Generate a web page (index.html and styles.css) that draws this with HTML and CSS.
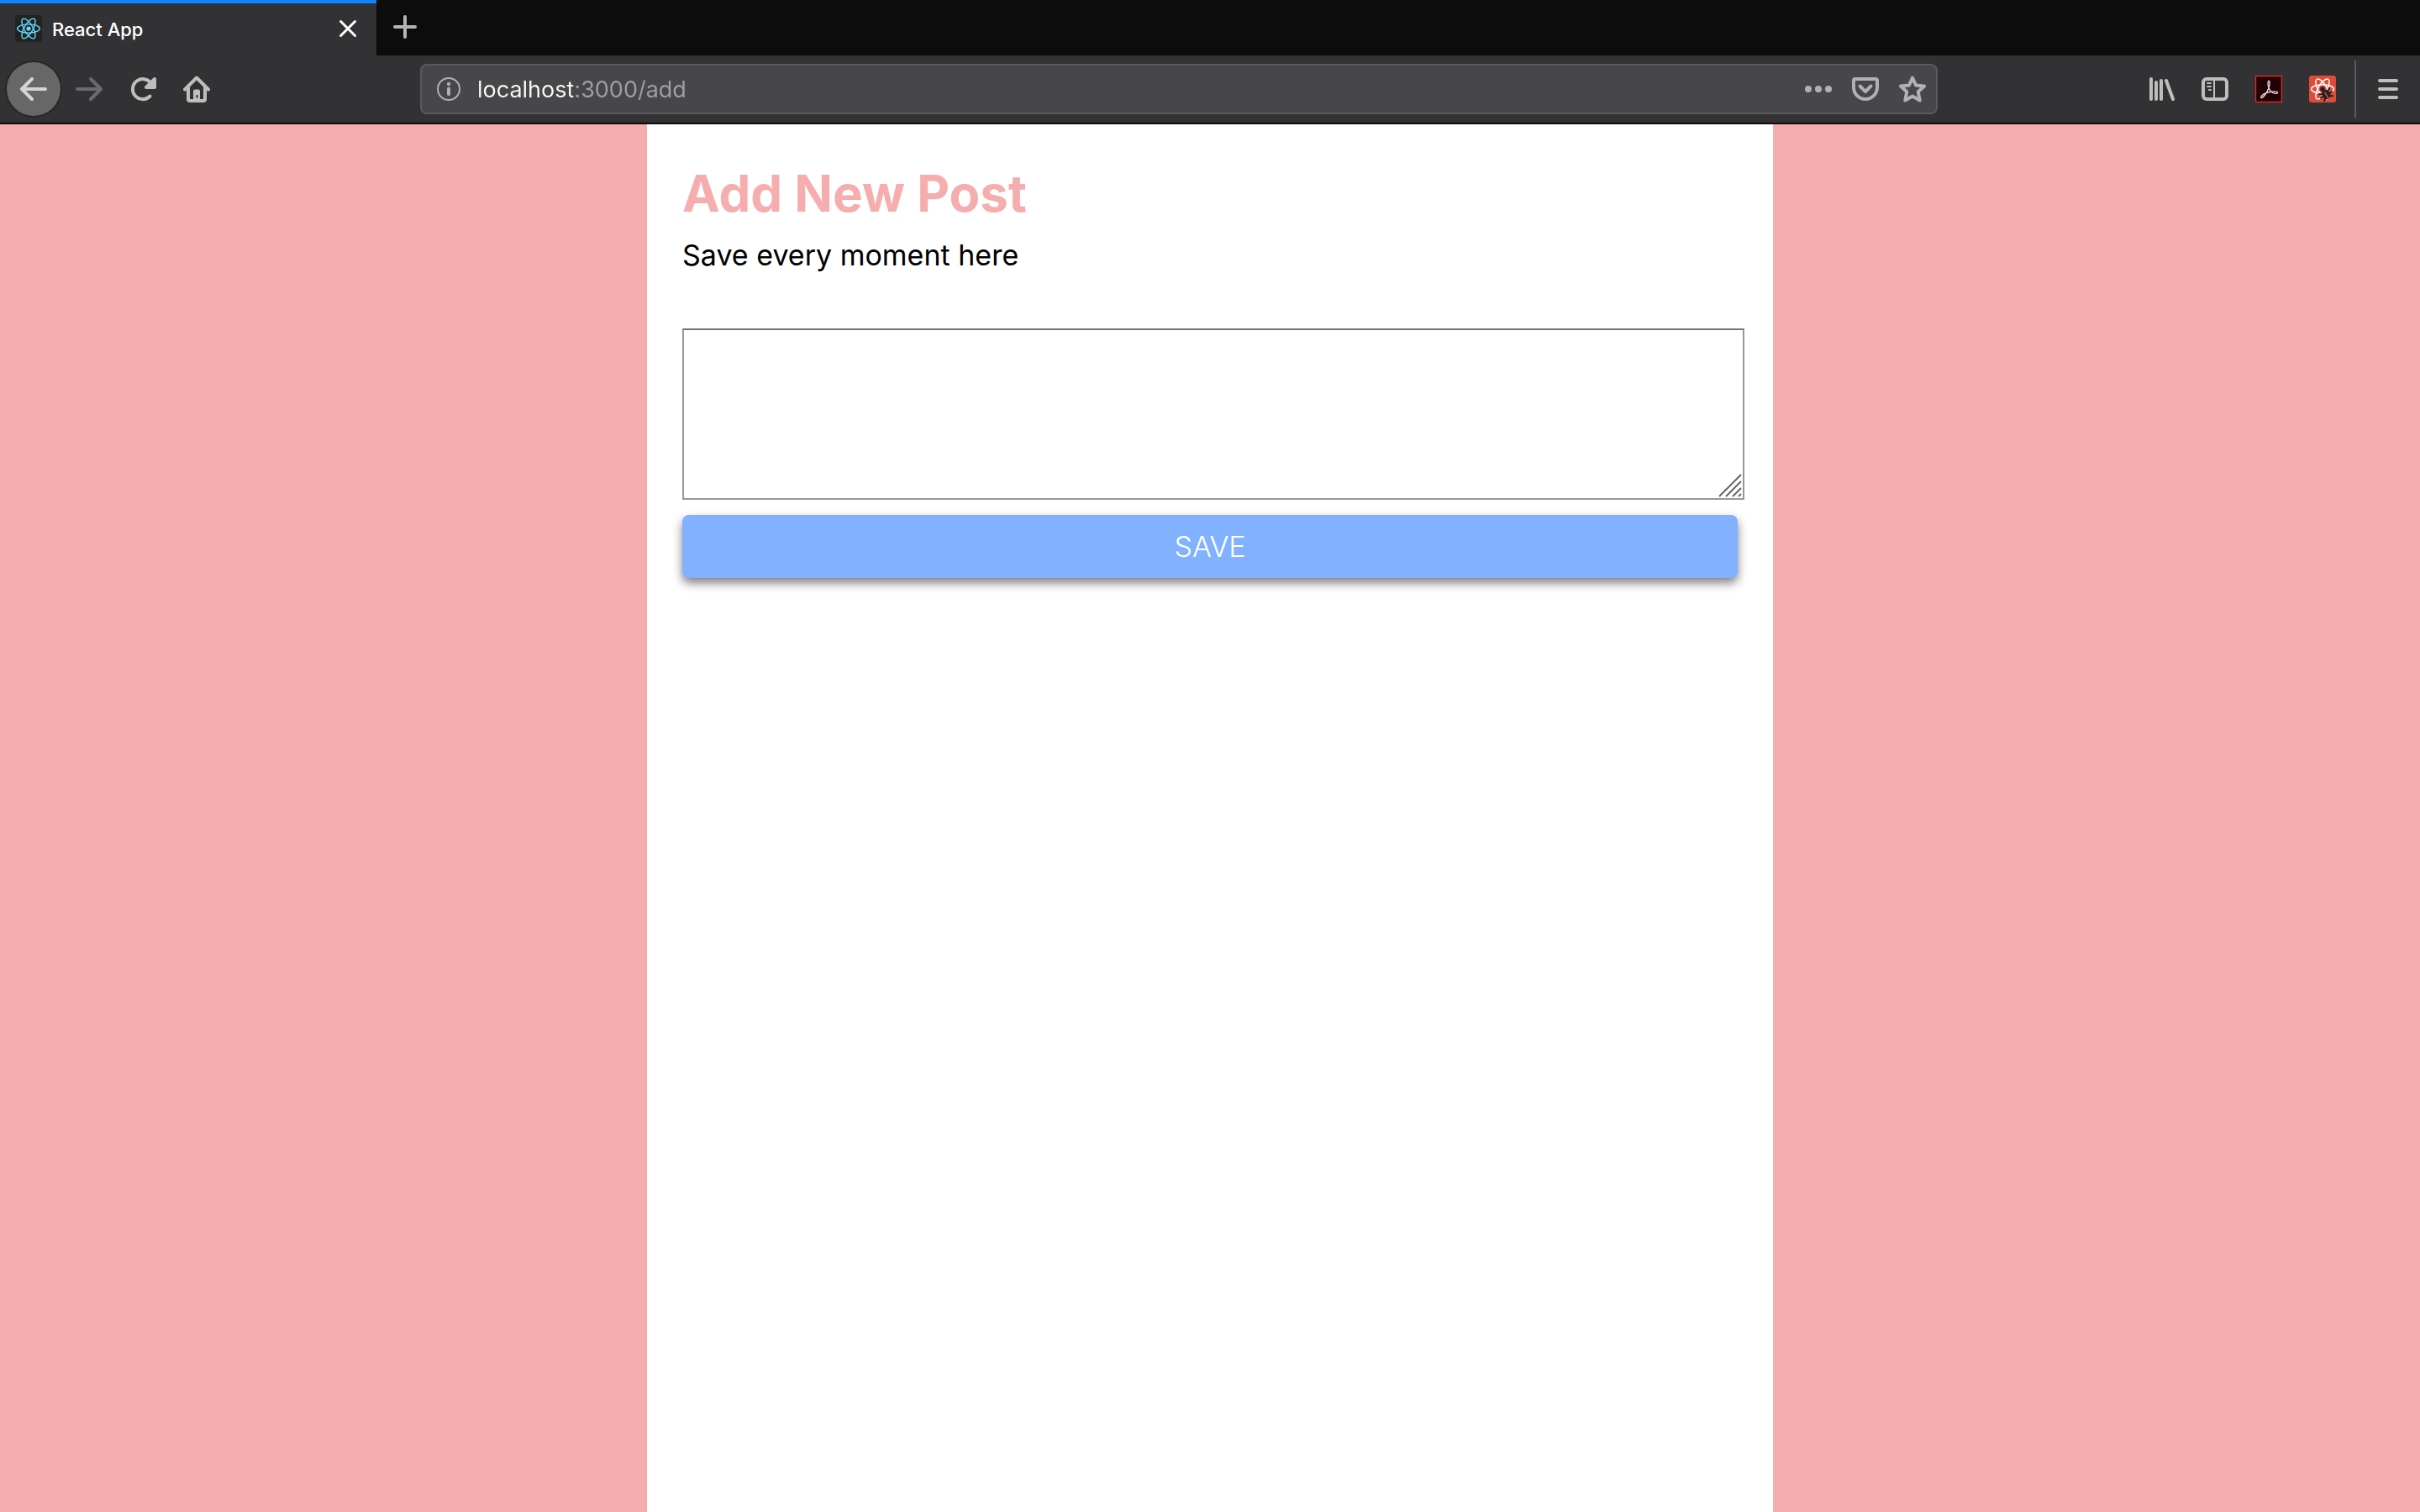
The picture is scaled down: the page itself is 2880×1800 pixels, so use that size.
FILE: index.html
```html
<!DOCTYPE html>
<html lang="en">
<head>
<meta charset="utf-8">
<title>React App</title>
<link rel="stylesheet" href="styles.css">
</head>
<body>
<header class="browser">
  <div class="tabs">
    <div class="tab">
      <svg class="favicon" viewBox="0 0 32 32" aria-hidden="true">
        <rect width="32" height="32" rx="4" fill="#222"/>
        <g fill="none" stroke="#61dafb" stroke-width="1.4">
          <ellipse cx="16" cy="16" rx="13.4" ry="5.1"/>
          <ellipse cx="16" cy="16" rx="13.4" ry="5.1" transform="rotate(60 16 16)"/>
          <ellipse cx="16" cy="16" rx="13.4" ry="5.1" transform="rotate(120 16 16)"/>
        </g>
        <circle cx="16" cy="16" r="2.6" fill="#61dafb"/>
      </svg>
      <span class="tab-title">React App</span>
      <button class="tab-close" aria-label="Close tab">
        <svg class="icon" viewBox="0 0 32 32"><path d="M7.500 7.500l17 17M24.500 7.500l-17 17" stroke-width="3"/></svg>
      </button>
    </div>
    <button class="new-tab" aria-label="New tab">
      <svg class="icon" viewBox="0 0 32 32"><path d="M16 4v24M4 16h24" stroke-width="4"/></svg>
    </button>
  </div>
  <nav class="toolbar" aria-label="Browser toolbar">
    <button class="tool tool-back" aria-label="Back">
      <svg class="icon" viewBox="0 0 32 32"><path d="M30 16H2.500M14 4L2 16l12 12" stroke-width="4"/></svg>
    </button>
    <button class="tool tool-disabled" aria-label="Forward" disabled>
      <svg class="icon" viewBox="0 0 32 32"><path d="M2 16h27.500M18 4l12 12-12 12" stroke-width="4"/></svg>
    </button>
    <button class="tool" aria-label="Reload">
      <svg class="icon" viewBox="0 0 32 32"><path d="M24.500 24.500A12 12 0 1 1 26.500 10.500" stroke-width="4"/><path d="M30 4v10H20z" fill="currentColor" stroke-width="4"/></svg>
    </button>
    <button class="tool" aria-label="Home">
      <svg class="icon" viewBox="0 0 32 32"><path d="M2 16.500L16 2.500l14 14M6 14v14a2 2 0 0 0 2 2h16a2 2 0 0 0 2-2V14" stroke-width="4"/><path d="M12 30V18.500a2 2 0 0 1 2-2h4a2 2 0 0 1 2 2V30h-2.500v-7h-2v7z" fill="currentColor" stroke="none"/><path d="M14 28h4" stroke-width="3"/></svg>
    </button>
    <div class="address">
      <button class="address-info" aria-label="Site information">
        <svg class="icon" viewBox="0 0 32 32"><circle cx="16" cy="16" r="13" stroke-width="2"/><path d="M16 15.500v6.500" stroke-width="4"/><circle cx="16" cy="10" r="2.200" fill="currentColor" stroke="none"/></svg>
      </button>
      <input class="address-input" type="text" aria-label="Address" value="localhost:3000/add">
      <button class="address-action" aria-label="Page actions">
        <svg class="icon" viewBox="0 0 32 32"><g fill="currentColor" stroke="none"><circle cx="4" cy="16" r="4"/><circle cx="16" cy="16" r="4"/><circle cx="28" cy="16" r="4"/></g></svg>
      </button>
      <button class="address-action" aria-label="Save to Pocket">
        <svg class="icon" viewBox="0 0 32 32"><path d="M4 4h24a2 2 0 0 1 2 2v8a14 14 0 0 1-28 0V6a2 2 0 0 1 2-2z" stroke-width="4"/><path d="M9.500 12.500L16 19l6.500-6.500" stroke-width="4"/></svg>
      </button>
      <button class="address-action" aria-label="Bookmark this page">
        <svg class="icon" viewBox="0 0 32 32"><path d="M16 2.500l4 9 10 1.100-7.300 6.600 2 10.300L16 24.600l-8.700 4.900 2-10.300L2 12.600l10-1.100z" stroke-width="4"/></svg>
      </button>
    </div>
    <button class="tool" aria-label="Library">
      <svg class="icon" viewBox="0 0 32 32"><path d="M4 4v24M10 8v20M16 6v22M22 6l8 22" stroke-width="4"/></svg>
    </button>
    <button class="tool" aria-label="Sidebars">
      <svg class="icon" viewBox="0 0 32 32"><rect x="2" y="4" width="28" height="24" rx="4" stroke-width="4"/><path d="M15 5v22" stroke-width="2"/><path d="M7 9h4M7 13h4M9 17h2" stroke-width="2"/></svg>
    </button>
    <button class="tool" aria-label="Adobe Acrobat">
      <svg class="icon" viewBox="0 0 32 32"><rect x="0.500" y="0.500" width="31" height="31" fill="#200206" stroke="#f2271c" stroke-width="1.400"/><path d="M15.500 6.500c2-1.500 2 4 .5 8-1.800 5-5.500 11-8.500 12-2.600-.5 1-4.500 6-6 5-1.600 10-2 12.500-1 2.200 2-2.500 2.800-6 .5-4-2.600-6-9.500-4.500-13.500z" stroke="#ddd0d0" stroke-width="1.400"/></svg>
    </button>
    <button class="tool" aria-label="React Developer Tools">
      <svg class="icon" viewBox="0 0 32 32"><rect width="32" height="32" rx="3" fill="#dd4b39" stroke="none"/><g stroke="#fff" stroke-width="1.500"><ellipse cx="16" cy="16" rx="13.400" ry="5.200"/><ellipse cx="16" cy="16" rx="13.400" ry="5.200" transform="rotate(60 16 16)"/><ellipse cx="16" cy="16" rx="13.400" ry="5.200" transform="rotate(120 16 16)"/></g><circle cx="16" cy="16" r="2.800" fill="#222" stroke="none"/><g transform="rotate(-30 20 22)"><ellipse cx="20" cy="22.500" rx="5" ry="6" fill="#222" stroke="none"/><path d="M13 18l3 2M27 18l-3 2M12.500 23h3M27.500 23h-3M14 28l3-2M26 28l-3-2" stroke="#222" stroke-width="2"/><path d="M20 20v9" stroke="#dd4b39" stroke-width="1.500"/></g></svg>
    </button>
    <span class="divider"></span>
    <button class="tool" aria-label="Open menu">
      <svg class="icon" viewBox="0 0 32 32"><path d="M6 6h20M6 16h20M6 26h20" stroke-width="4"/></svg>
    </button>
  </nav>
</header>
<main class="page">
  <section class="panel">
    <h1 class="title">Add New Post</h1>
    <p class="subtitle">Save every moment here</p>
    <form class="post-form">
      <div class="field">
        <textarea class="post-text" aria-label="Post text"></textarea>
        <svg class="grip" viewBox="0 0 28 28" aria-hidden="true"><path d="M1 27L27 1M9 27L27 9M17 27L27 17M24 27l3-3"/></svg>
      </div>
      <button class="save" type="button">SAVE</button>
    </form>
  </section>
</main>
</body>
</html>
```
FILE: styles.css
```css
* {
  box-sizing: border-box;
}

body {
  margin: 0;
  min-height: 100vh;
  display: flex;
  flex-direction: column;
  background: #f5adad;
  font-family: Inter, "Liberation Sans", sans-serif;
}

button {
  display: flex;
  align-items: center;
  justify-content: center;
  padding: 0;
  border: 0;
  background: none;
  color: inherit;
  font: inherit;
}

.icon {
  width: 32px;
  height: 32px;
  fill: none;
  stroke: currentColor;
  stroke-linecap: round;
  stroke-linejoin: round;
}

/* Browser window */
.browser {
  background: #323234;
  border-bottom: 2px solid #0c0c0d;
  color: #bebebf;
}

.tabs {
  display: flex;
  height: 66px;
  background: #0c0c0d;
}

.tab {
  display: flex;
  align-items: center;
  width: 448px;
  padding: 0 18px 2px;
  border-top: 4px solid #0a84ff;
  background: #323234;
  color: #fff;
}

.favicon {
  width: 32px;
  height: 32px;
}

.tab-title {
  flex: 1;
  padding: 2px 0 0 12px;
  font-size: 22px;
  font-weight: 500;
}

.tab-close {
  width: 32px;
  height: 32px;
}

.new-tab {
  width: 68px;
  height: 64px;
  color: #b4b4b4;
}

.toolbar {
  display: flex;
  align-items: center;
  height: 80px;
  padding: 0 6px 0 8px;
}

.tool {
  width: 64px;
  height: 64px;
}

.tool-back {
  margin-right: 2px;
  border-radius: 50%;
  background: #676767;
  box-shadow: 0 0 0 2px #272728;
  color: #d4d4d4;
}

.tool-disabled {
  color: #6b6b6d;
}

.address {
  display: flex;
  align-items: center;
  flex: 1;
  height: 60px;
  margin: 0 234px;
  border: 2px solid #5a5a5c;
  border-radius: 8px;
  background: #474749;
  color: #b1b1b3;
}

.address-info {
  width: 64px;
  height: 56px;
}

/* The host is drawn brighter than the port and path */
.address-input {
  flex: 1;
  min-width: 0;
  padding: 2px 0 0 2px;
  border: 0;
  outline: 0;
  background: linear-gradient(to right, #f9f9fa 116px, #a0a0a2 116px);
  background-clip: text;
  color: transparent;
  font: 400 27px/40px Inter, "Liberation Sans", sans-serif;
}

.address-action {
  width: 56px;
  height: 56px;
}

.divider {
  width: 2px;
  height: 68px;
  margin: 0 6px;
  background: #5c5c5e;
}

/* Page */
.page {
  flex: 1;
  display: flex;
  justify-content: center;
}

.panel {
  width: 100%;
  max-width: 1340px;
  padding: 42px;
  background: #fff;
}

.title {
  margin: 0;
  color: #f5adad;
  font-size: 60px;
  font-weight: 700;
  line-height: 80px;
}

.subtitle {
  margin: 12px 0 0;
  color: #000;
  font-size: 34px;
  line-height: 44px;
}

.post-form {
  margin-top: 65px;
}

.field {
  position: relative;
  margin-right: -8px;
}

.post-text {
  display: block;
  width: 100%;
  height: 204px;
  padding: 4px;
  border: 2px solid #979797;
  border-top-color: #737373;
  border-radius: 0;
  outline: 0;
  resize: none;
  background: #fff;
  font: 34px/44px Inter, "Liberation Sans", sans-serif;
}

.grip {
  position: absolute;
  right: 3px;
  bottom: 3px;
  width: 28px;
  height: 28px;
  fill: none;
  stroke: #666;
  stroke-width: 2;
}

.save {
  width: 100%;
  height: 75px;
  margin-top: 18px;
  border-radius: 8px;
  background: #82b1ff;
  box-shadow: 0 6px 12px rgba(0, 0, 0, 0.5);
  color: #fff;
  font-size: 34px;
  font-weight: 300;
}
```
